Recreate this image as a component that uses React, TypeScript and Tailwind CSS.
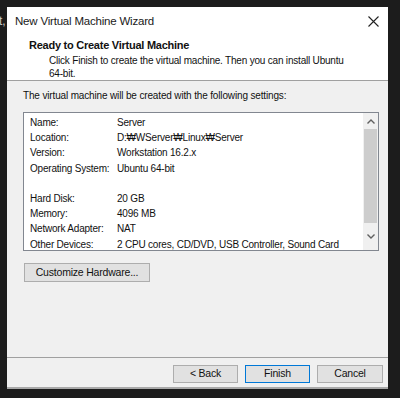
import React from "react";

const rows: [string, string][] = [
  ["Name:", "Server"],
  ["Location:", "D:\u20A9WServer\u20A9Linux\u20A9Server"],
  ["Version:", "Workstation 16.2.x"],
  ["Operating System:", "Ubuntu 64-bit"],
  ["", ""],
  ["Hard Disk:", "20 GB"],
  ["Memory:", "4096 MB"],
  ["Network Adapter:", "NAT"],
  ["Other Devices:", "2 CPU cores, CD/DVD, USB Controller, Sound Card"],
];

function Btn({ label, primary, className = "" }: { label: string; primary?: boolean; className?: string }) {
  return (
    <div
      className={
        "flex items-center justify-center h-[18px] bg-[#e1e1e1] border text-[10.5px] tracking-[-0.2px] text-[#111] " +
        (primary ? "border-[#0078d7] " : "border-[#adadad] ") +
        className
      }
    >
      {label}
    </div>
  );
}

export default function App() {
  return (
    <div
      className="relative w-[400px] h-[398px] bg-[#1c1c1c] pl-[7px] pt-[7px] overflow-hidden"
      style={{ fontFamily: '"Liberation Sans", Arial, sans-serif' }}
    >
      <span className="absolute left-[-1px] top-[12px] text-[12px] text-[#c8c8c8]">t,</span>
      <div className="w-[381px] h-[382px] bg-[#f0f0f0] flex flex-col border-b-[2px] border-[#a9a9a9]">
        <div className="bg-white h-[74px] border-b border-[#a0a0a0] flex flex-col">
          <div className="flex items-center justify-between h-[27px] pl-[8px] pr-[9px] pt-[2px]">
            <span className="text-[11.5px] tracking-[-0.2px] text-[#1a1a1a]">New Virtual Machine Wizard</span>
            <svg width="11" height="11" viewBox="0 0 11 11">
              <path d="M0.5 0.5 L10.5 10.5 M10.5 0.5 L0.5 10.5" stroke="#222" strokeWidth="1.1" />
            </svg>
          </div>
          <div className="pl-[22px] pt-[4px] text-[11px] tracking-[-0.25px] leading-[14px] font-bold text-[#111]">
            Ready to Create Virtual Machine
          </div>
          <div className="pl-[42px] pr-[30px] pt-[2px] text-[10px] tracking-[-0.2px] leading-[13px] text-[#111]">
            Click Finish to create the virtual machine. Then you can install Ubuntu 64-bit.
          </div>
        </div>
        <div className="pl-[16px] pt-[8px] text-[10px] tracking-[-0.15px] leading-[13px] text-[#111]">
          The virtual machine will be created with the following settings:
        </div>
        <div className="ml-[16px] mt-[10px] w-[356px] h-[139px] bg-white border border-[#828790] flex">
          <div className="flex-1 pl-[6px] pt-[2px]">
            {rows.map(([k, v], i) => (
              <div key={i} className="flex h-[15.2px] items-center text-[10px] tracking-[-0.2px] text-[#111] whitespace-nowrap">
                <span className="w-[87px]">{k}</span>
                <span>{v}</span>
              </div>
            ))}
          </div>
          <div className="w-[15px] bg-[#f0f0f0] flex flex-col">
            <div className="h-[16px] flex items-center justify-center">
              <svg width="8" height="5" viewBox="0 0 8 5">
                <path d="M0.5 4.5 L4 1 L7.5 4.5" stroke="#606060" strokeWidth="1.4" fill="none" />
              </svg>
            </div>
            <div className="h-[94px] mx-[1px] bg-[#cdcdcd]" />
            <div className="flex-1 flex items-center justify-center">
              <svg width="8" height="5" viewBox="0 0 8 5">
                <path d="M0.5 0.5 L4 4 L7.5 0.5" stroke="#606060" strokeWidth="1.4" fill="none" />
              </svg>
            </div>
          </div>
        </div>
        <div className="pl-[17px] pt-[12px]">
          <Btn label="Customize Hardware..." className="w-[126px] h-[19px]" />
        </div>
        <div className="flex-1" />
        <div className="border-t border-[#a0a0a0] h-[30px] flex justify-end items-start pt-[7px] pr-[5px] gap-[7px]">
          <Btn label="< Back" className="w-[65px]" />
          <Btn label="Finish" primary className="w-[65px]" />
          <Btn label="Cancel" className="w-[66px]" />
        </div>
      </div>
    </div>
  );
}
